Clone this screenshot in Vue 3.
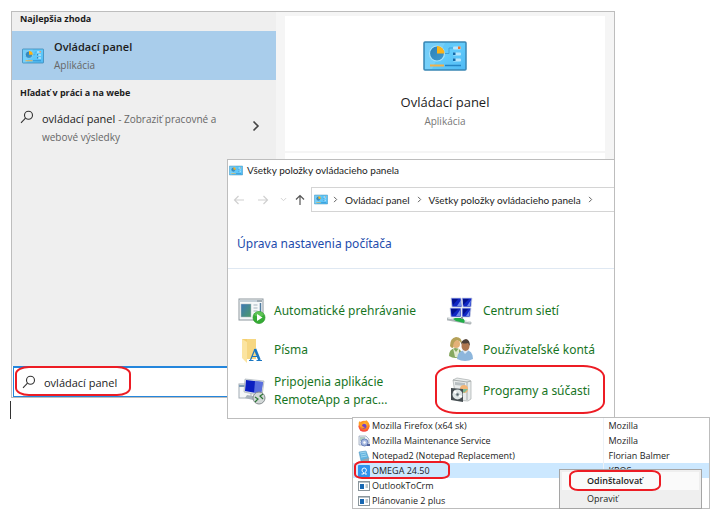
<script setup>
import { ref } from 'vue'

const query = ref('ovládací panel')

const items = [
  { icon: 'autoplay', label: 'Automatické prehrávanie' },
  { icon: 'network', label: 'Centrum sietí' },
  { icon: 'fonts', label: 'Písma' },
  { icon: 'users', label: 'Používateľské kontá' },
  { icon: 'remote', label: 'Pripojenia aplikácie RemoteApp a prac...' },
  { icon: 'programs', label: 'Programy a súčasti', ringed: true },
]

const programs = [
  { icon: 'firefox', name: 'Mozilla Firefox (x64 sk)', vendor: 'Mozilla' },
  { icon: 'maintenance', name: 'Mozilla Maintenance Service', vendor: 'Mozilla' },
  { icon: 'notepad', name: 'Notepad2 (Notepad Replacement)', vendor: 'Florian Balmer' },
  { icon: 'omega', name: 'OMEGA 24.50', vendor: 'KROS', selected: true },
  { icon: 'generic', name: 'OutlookToCrm', vendor: '' },
  { icon: 'generic', name: 'Plánovanie 2 plus', vendor: '' },
]
</script>

<template>
  <main class="desktop">
    <svg class="sprite" aria-hidden="true">
      <defs>
        <linearGradient id="g-panel" x1="0" y1="0" x2="1" y2="1">
          <stop offset="0" stop-color="#5fc4f5" /><stop offset=".5" stop-color="#62cbfb" /><stop offset="1" stop-color="#4fb9f4" />
        </linearGradient>
        <linearGradient id="g-pie" x1="0" y1="0" x2="1" y2="1">
          <stop offset="0" stop-color="#2c7fb5" /><stop offset="1" stop-color="#3f9bd0" />
        </linearGradient>
        <linearGradient id="g-photo" x1="0" y1="0" x2="1" y2="1">
          <stop offset="0" stop-color="#3c77b8" /><stop offset="1" stop-color="#4d9a68" />
        </linearGradient>
        <radialGradient id="g-fox" cx=".55" cy=".35" r=".7">
          <stop offset="0" stop-color="#ffd43a" /><stop offset=".5" stop-color="#ff8a1c" /><stop offset="1" stop-color="#f0284a" />
        </radialGradient>
      </defs>
      <symbol id="panel" viewBox="0 0 44 30">
        <rect x="1" y="1" width="42" height="28" rx="1" fill="url(#g-panel)" stroke="#3a86b4" stroke-width="1.500" />
        <path d="M2 2h20L9 28H2z" fill="#fff" opacity=".13" />
        <circle cx="14" cy="12.500" r="7.500" fill="url(#g-pie)" stroke="#a7e2fb" stroke-width="1.200" />
        <path d="M14 12.500V5a7.500 7.500 0 0 1 7.500 7.500z" fill="#fcb316" />
        <path d="M22 12.500h4V7h4" fill="none" stroke="#3fa3dc" />
        <rect x="30" y="5.500" width="8" height="3" rx="1" fill="#b8e6fc" /><rect x="35" y="5.500" width="2.500" height="2.500" fill="#f4732a" />
        <rect x="30" y="11.500" width="8" height="3" rx="1" fill="#b8e6fc" /><rect x="30" y="11.500" width="2.500" height="2.500" fill="#1569a8" />
        <rect x="30" y="17.500" width="8" height="3" rx="1" fill="#b8e6fc" /><rect x="30" y="17.500" width="2.500" height="2.500" fill="#1569a8" />
        <path d="M7 24.500h14" stroke="#f1b14a" stroke-width="2" /><path d="M22 24.500h16" stroke="#2484c4" stroke-width="1.500" />
      </symbol>
      <symbol id="search" viewBox="0 0 14 14">
        <circle cx="8.500" cy="5.200" r="4" fill="none" stroke="#333" stroke-width="1.100" />
        <path d="M5.500 8.200 1 12.800" stroke="#333" stroke-width="1.100" />
      </symbol>
      <symbol id="chevron" viewBox="0 0 8 12">
        <path d="M1.500 1.500 6 6 1.500 10.500" fill="none" stroke="currentColor" stroke-width="1.600" />
      </symbol>
      <symbol id="arrow" viewBox="0 0 12 12">
        <path d="M11 6H1.500M5.500 2 1.500 6l4 4" fill="none" stroke="currentColor" stroke-width="1.200" />
      </symbol>

      <symbol id="autoplay" viewBox="0 0 28 28">
        <rect x="1" y="2" width="24" height="21" fill="#f6f8f9" stroke="#8d979e" />
        <path d="M1.500 4h23" stroke="#c5d0d8" stroke-width="2" /><path d="M19 4h5" stroke="#79858d" />
        <rect x="3" y="7" width="10" height="13" fill="url(#g-photo)" stroke="#aeb9c0" stroke-width=".5" />
        <path d="M15.500 8h4M15.500 11h4M15.500 14h4M15.500 17h2" stroke="#a3b2bd" /><path d="M22.500 6v9" stroke="#507ca0" stroke-width="1.500" />
        <circle cx="21" cy="20.500" r="6" fill="#35ac35" stroke="#259325" stroke-width=".7" />
        <path d="M16 18a5.300 5.300 0 0 1 10 0q-5 3-10 0z" fill="#78d36a" opacity=".6" />
        <path d="m19 17 5.500 3.500L19 24z" fill="#fff" />
      </symbol>
      <symbol id="network" viewBox="0 0 28 28">
        <g fill="#1026c4" stroke="#cfd4e2" stroke-width=".8">
          <path d="M4 1h10l1 9H5zM15 1h10l-1 9h-8zM3 11h11v9H4zM15 11h9l-1 9h-8z" />
        </g>
        <path d="M5 2h6l-5 6zM16 2h6l-6 6zM4 12h7l-6 6zM16 12h5l-5 6z" fill="#04118a" />
        <path d="m10 9 4-6v6zM20 9l4-6-1 6zM9 19l4-6v6zM19 19l4-6-1 6z" fill="#6f8bea" />
        <path d="m1 22 22 4" stroke="#aeb5b8" stroke-width="3" stroke-linecap="round" />
        <path d="m1 21 22 4" stroke="#eef2f3" stroke-linecap="round" />
        <path d="m6 22 3 2 8 2q2-3-2-5h-7z" fill="#20ae48" /><path d="M15 20v2" stroke="#8f9a9d" stroke-width="2" />
      </symbol>
      <symbol id="fonts" viewBox="0 0 28 28">
        <path d="M4 3h14v20H8l-4-2z" fill="#f4cf70" /><path d="M4 3l5 3v21l-5-5z" fill="#fbe4a0" /><path d="M9 6V3h9v20H9z" fill="#f6d782" />
        <path d="m17 13-4.500 11" fill="none" stroke="#1976c2" stroke-width="1.200" />
        <path d="m17 13 4.500 11" fill="none" stroke="#1976c2" stroke-width="2.600" />
        <path d="M14 20.500h5.500M11 24.500h4.500M18.500 24.500h5.500" stroke="#1976c2" />
      </symbol>
      <symbol id="users" viewBox="0 0 28 28">
        <path d="M2 20q0-7 6-8 7 0 7 8-7 4-13 0z" fill="#86a860" /><path d="m6 12 3 4 3-4v9H8z" fill="#e3ead0" />
        <circle cx="9" cy="8" r="4" fill="#e3b178" /><path d="M3 10q0-8 6-9 6 0 6 7-2-3-5-4-4 1-4 8-2 0-3-2z" fill="#b5a158" />
        <path d="M10 23q0-8 8-9 8 0 8 9-8 4-16 0z" fill="#8db6dc" /><path d="m15 14 3 4 4-4" fill="#dbe8f4" />
        <ellipse cx="18.500" cy="10" rx="4" ry="5" fill="#ae7750" /><path d="M14 9q0-5 5-6 4 1 4 7l-2-3q-4 1-6 0z" fill="#4d4038" />
      </symbol>
      <symbol id="remote" viewBox="0 0 28 28">
        <rect x="1" y="7" width="12" height="14" fill="#f5f7f8" stroke="#a2acb4" /><path d="M1 9h12" stroke="#7f9db8" stroke-width="2" />
        <path d="m7 2 19 2-2 15-18-4z" fill="#dce1e8" stroke="#9ba5ad" stroke-width=".6" /><path d="m8 3 17 2-2 12-16-3z" fill="#0b1fc1" />
        <path d="m17 4 8 1-2 12-7-1z" fill="#7b91ea" opacity=".7" /><path d="m9 18 6 1v4l-8-2z" fill="#a9b3bb" />
        <circle cx="21" cy="21" r="6" fill="#d3d8d8" stroke="#858d8f" />
        <path d="m17 20 3 2-3 3M25 17l-3 2 3 3" fill="none" stroke="#2d7735" stroke-width="1.200" />
      </symbol>
      <symbol id="programs" viewBox="0 0 28 28">
        <path d="m6 3 4-2 12 2 2 1v18l-3 2-12-1z" fill="#e9ecec" stroke="#989f9f" stroke-width=".6" /><path d="m6 3 14 2v18M20 5l4-1" fill="none" stroke="#a7adad" />
        <path d="m8 5 10 1v3L8 8z" fill="#b8bfc2" /><circle cx="17" cy="12" r="4" fill="#f3b575" /><path d="m14 12 3 4 4-4z" fill="#7cbb96" />
        <path d="m4 11 12 1v13L4 23z" fill="#454d51" /><circle cx="10.500" cy="17.500" r="5" fill="#dfe7e7" /><path d="m7 14 3.500 3.500L15 20" stroke="#fff" stroke-width="2" />
        <circle cx="10.500" cy="17.500" r="1.500" fill="#4d5f65" stroke="#aab6b9" />
      </symbol>

      <symbol id="firefox" viewBox="0 0 12 12">
        <circle cx="6" cy="6.300" r="5.500" fill="url(#g-fox)" /><circle cx="6" cy="6.300" r="2.500" fill="#7543c5" />
        <path d="M1 5Q0 2 2 1l1 2q2-1 3 0L4 5q0 2 3 2-3 3-6-2zM8 0q4 3 3.500 7Q10 3 7 2z" fill="#ff9f22" />
      </symbol>
      <symbol id="maintenance" viewBox="0 0 12 12">
        <path d="M1 1h7l3 3v6H1z" fill="#edf1f7" stroke="#8e9cb1" stroke-width=".7" /><path d="M2 3h5M2 5h3" stroke="#76a68b" />
        <circle cx="6.500" cy="7.500" r="3.500" fill="#a5b8e0" stroke="#6d84bd" /><circle cx="6.500" cy="7.500" r="1.200" fill="#fff" /><path d="M9 10h3" stroke="#53639b" stroke-width="2" />
      </symbol>
      <symbol id="notepad" viewBox="0 0 12 12">
        <path d="m1 2 7-1 3 8-8 2z" fill="#62b3df" stroke="#5a9cc4" stroke-width=".6" /><path d="m2 3 6-1M3 5l5-1M3 7l6-1" stroke="#9fd6f0" /><path d="m4 10 7-2v3H5z" fill="#9da6ab" />
      </symbol>
      <symbol id="omega" viewBox="0 0 12 12">
        <rect width="12" height="12" rx="1" fill="#2f93ee" />
        <path d="M3.500 9h2V7.500Q4 7 4 5.200 4 3 6.200 3t2.200 2.200q0 1.800-1.500 2.300V9h2" fill="none" stroke="#fff" />
      </symbol>
      <symbol id="generic" viewBox="0 0 12 12">
        <rect x=".5" y="1.500" width="11" height="9" fill="#fff" stroke="#8b969c" /><path d="M1 2.500h10" stroke="#bac4ca" />
        <rect x="2" y="4" width="4" height="5" fill="#1767b2" /><path d="M7.500 5h2.500M7.500 7h2.500" stroke="#7d8d97" />
      </symbol>
    </svg>

    <section class="window search-window" aria-label="Vyhľadávanie">
      <div class="results">
        <h2>Najlepšia zhoda</h2>
        <button class="best" type="button">
          <svg class="icon-panel"><use href="#panel" /></svg>
          <span class="best-text"><strong>Ovládací panel</strong><small>Aplikácia</small></span>
        </button>
        <h2 class="web-title">Hľadať v práci a na webe</h2>
        <button class="web" type="button">
          <svg class="icon-search"><use href="#search" /></svg>
          <span class="web-text">ovládací panel <small>- Zobraziť pracovné a webové výsledky</small></span>
          <svg class="icon-chevron"><use href="#chevron" /></svg>
        </button>
      </div>
      <div class="preview">
        <div class="preview-card">
          <svg class="icon-large"><use href="#panel" /></svg>
          <h1>Ovládací panel</h1>
          <p>Aplikácia</p>
        </div>
        <div class="preview-rest"></div>
      </div>
      <label class="search-box">
        <span class="search-ring"></span>
        <svg class="icon-search"><use href="#search" /></svg>
        <input v-model="query" type="text" aria-label="Hľadať">
      </label>
    </section>
    <span class="caret"></span>

    <section class="window control-window">
      <header class="title-bar">
        <svg class="icon-title"><use href="#panel" /></svg>
        <span>Všetky položky ovládacieho panela</span>
      </header>
      <nav class="nav-bar">
        <div class="nav-buttons">
          <button type="button" disabled aria-label="Späť"><svg><use href="#arrow" /></svg></button>
          <button type="button" disabled aria-label="Dopredu"><svg class="forward"><use href="#arrow" /></svg></button>
          <button class="recent" type="button" disabled aria-label="Posledné"><svg><use href="#chevron" /></svg></button>
          <button class="up" type="button" aria-label="Nahor"><svg><use href="#arrow" /></svg></button>
        </div>
        <div class="address">
          <svg class="icon-title"><use href="#panel" /></svg>
          <svg class="sep"><use href="#chevron" /></svg>
          <a href="#">Ovládací panel</a>
          <svg class="sep"><use href="#chevron" /></svg>
          <a href="#">Všetky položky ovládacieho panela</a>
          <svg class="sep"><use href="#chevron" /></svg>
        </div>
      </nav>
      <h2 class="heading">Úprava nastavenia počítača</h2>
      <div class="items">
        <a v-for="item in items" :key="item.icon" href="#" class="item" :class="{ ringed: item.ringed }">
          <svg><use :href="'#' + item.icon" /></svg>
          <span>{{ item.label }}</span>
        </a>
      </div>
    </section>

    <section class="window programs-window">
      <table>
        <tbody>
          <tr v-for="p in programs" :key="p.name" :class="{ selected: p.selected }">
            <td>
              <span class="program">
                <svg><use :href="'#' + p.icon" /></svg>{{ p.name }}
              </span>
            </td>
            <td class="vendor">{{ p.vendor }}</td>
          </tr>
        </tbody>
      </table>
      <div class="menu">
        <button class="active" type="button">Odinštalovať</button>
        <button type="button">Opraviť</button>
      </div>
    </section>
  </main>
</template>

<style>
body {
  margin: 0;
  background: #fff;
}
</style>

<style scoped>
*,
*::before,
*::after {
  box-sizing: border-box;
}

.desktop {
  position: relative;
  min-height: 100vh;
  overflow: hidden;
  color: #1c1c1c;
  font-family: "Open Sans", "Noto Sans", sans-serif;
  font-size: 10px;
}

.sprite {
  position: absolute;
  width: 0;
  height: 0;
}

svg {
  display: block;
  flex: none;
}

h1,
h2,
p {
  margin: 0;
  font-weight: 400;
}

button {
  padding: 0;
  border: 0;
  background: none;
  color: inherit;
  font: inherit;
  text-align: left;
}

a {
  color: inherit;
  text-decoration: none;
}

.window {
  position: absolute;
  border: 1px solid #bdbdbd;
  background: #fff;
}

/* Search window */
.search-window {
  top: 11px;
  left: 11px;
  right: 112px;
  display: grid;
  grid-template-columns: 264px 1fr;
  grid-template-rows: 354px auto;
}

.results {
  background: #efefef;
}

.results h2 {
  padding-left: 8px;
  font-size: 9px;
  font-weight: 700;
  line-height: 14px;
}

.best {
  display: flex;
  align-items: center;
  gap: 10px;
  width: 100%;
  height: 49px;
  margin-top: 5px;
  padding-left: 10px;
  background: #a9cdeb;
}

.icon-panel {
  width: 22px;
  height: 16px;
}

.best-text {
  display: grid;
  line-height: 18px;
}

.best strong {
  font-size: 11px;
  font-weight: 600;
}

small {
  color: #666;
  font-size: 10px;
}

.results .web-title {
  padding-top: 6px;
}

.web {
  display: flex;
  width: 100%;
  padding: 10px 16px 0 8px;
  font-size: 11px;
  line-height: 17px;
}

.icon-search {
  width: 14px;
  height: 14px;
}

.web-text {
  width: 180px;
  margin-left: 8px;
}

.icon-chevron {
  width: 8px;
  height: 12px;
  margin: 10px 0 0 auto;
  color: #444;
}

.preview {
  display: flex;
  flex-direction: column;
  gap: 2px;
  padding: 4px 9px 0;
  background: #f5f5f5;
}

.preview-card {
  display: flex;
  flex-direction: column;
  align-items: center;
  height: 135px;
  padding-top: 25px;
  background: #fff;
}

.preview-rest {
  flex: 1;
  background: #fff;
}

.icon-large {
  width: 44px;
  height: 30px;
}

.preview h1 {
  margin-top: 21px;
  font-size: 13px;
  line-height: 20px;
}

.preview p {
  color: #777;
  line-height: 18px;
}

.search-box {
  position: relative;
  grid-column: 1 / -1;
  display: flex;
  align-items: center;
  gap: 8px;
  height: 31px;
  margin-left: 1px;
  padding-left: 8px;
  border: 1px solid #2486dc;
  border-top-width: 2px;
  background: #fff;
}

.search-box input {
  width: 120px;
  padding: 0;
  border: 0;
  outline: 0;
  background: transparent;
  color: inherit;
  font: 11px "Open Sans", "Noto Sans", sans-serif;
}

.search-ring {
  position: absolute;
  top: -2px;
  left: 1px;
  width: 116px;
  height: 30px;
  border: 2px solid #ed1c24;
  border-radius: 14px / 8px;
}

.caret {
  position: absolute;
  top: 401px;
  left: 10px;
  width: 1px;
  height: 18px;
  background: #333;
}

/* Control panel window */
.control-window {
  top: 159px;
  left: 227px;
  right: 112px;
  padding-bottom: 5px;
}

.title-bar {
  display: flex;
  align-items: center;
  gap: 4px;
  height: 20px;
  padding-left: 1px;
  font-family: Lato, "Open Sans", sans-serif;
}

.icon-title {
  width: 14px;
  height: 11px;
}

.nav-bar {
  display: flex;
  justify-content: space-between;
  margin-top: 7px;
  font-family: Lato, "Open Sans", sans-serif;
}

.nav-buttons {
  display: flex;
  align-items: center;
  gap: 12px;
  padding-left: 5px;
  color: #d0d0d0;
}

.nav-buttons svg {
  width: 12px;
  height: 12px;
}

.nav-buttons .recent svg {
  width: 5px;
  height: 7px;
  transform: rotate(90deg);
}

.forward {
  transform: rotate(180deg);
}

.nav-buttons .up {
  margin-left: -4px;
  color: #555;
}

.up svg {
  transform: rotate(90deg);
}

.address {
  display: flex;
  flex: 1;
  align-items: center;
  gap: 7px;
  height: 25px;
  margin-left: 5px;
  padding-left: 2px;
  border: 1px solid #d4d4d4;
  border-right: 0;
}

.sep {
  width: 5px;
  height: 7px;
  color: #555;
}

.address .icon-title + .sep {
  margin-left: -2px;
}

.heading {
  height: 57px;
  padding: 22px 9px 0;
  color: #1e4cac;
  font-family: "Noto Sans", "Open Sans", sans-serif;
  font-size: 12px;
  line-height: 20px;
  border-bottom: 1px solid #dfe8f2;
}

.items {
  display: grid;
  grid-template-columns: 209px 1fr;
  grid-template-rows: 40px 38px 44px;
  margin-top: 22px;
  padding-left: 10px;
  color: #17751f;
  font-family: "Noto Sans", "Open Sans", sans-serif;
  font-size: 12px;
  line-height: 18px;
}

.item {
  position: relative;
  display: flex;
  align-items: center;
  gap: 8px;
}

.item svg {
  width: 28px;
  height: 28px;
}

.item span {
  max-width: 150px;
}

.ringed::before {
  content: "";
  position: absolute;
  top: -4px;
  left: -12px;
  width: 170px;
  height: 49px;
  border: 2px solid #ed1c24;
  border-radius: 22px / 12px;
}

/* Installed programs */
.programs-window {
  top: 417px;
  left: 352px;
  right: 17px;
  font-size: 9px;
}

table {
  width: 100%;
  border-collapse: collapse;
  table-layout: fixed;
}

td {
  height: 15px;
  padding: 0 0 0 5px;
  line-height: 15px;
}

.vendor {
  width: 106px;
  border-left: 1px solid #edf2f7;
}

.program {
  display: flex;
  align-items: center;
  gap: 2px;
}

.program svg {
  width: 12px;
  height: 12px;
}

.selected td {
  background: #cce8ff;
}

.selected td:first-child {
  position: relative;
}

.selected td:first-child::before {
  content: "";
  position: absolute;
  top: -2px;
  left: 1px;
  width: 96px;
  height: 18px;
  border: 2px solid #ed1c24;
  border-radius: 8px / 5px;
}

.menu {
  position: absolute;
  right: 7px;
  bottom: -1px;
  width: 143px;
  padding: 2px 2px 0;
  border: 1px solid #a5a5a5;
  background: #efefef;
}

.menu button {
  position: relative;
  display: block;
  width: 100%;
  height: 18px;
  padding-left: 25px;
  line-height: 16px;
}

.menu .active {
  background: #fafafa;
  font-weight: 600;
}

.menu .active::after {
  content: "";
  position: absolute;
  top: -2px;
  left: 7px;
  width: 92px;
  height: 21px;
  border: 2px solid #ed1c24;
  border-radius: 9px / 6px;
}
</style>
